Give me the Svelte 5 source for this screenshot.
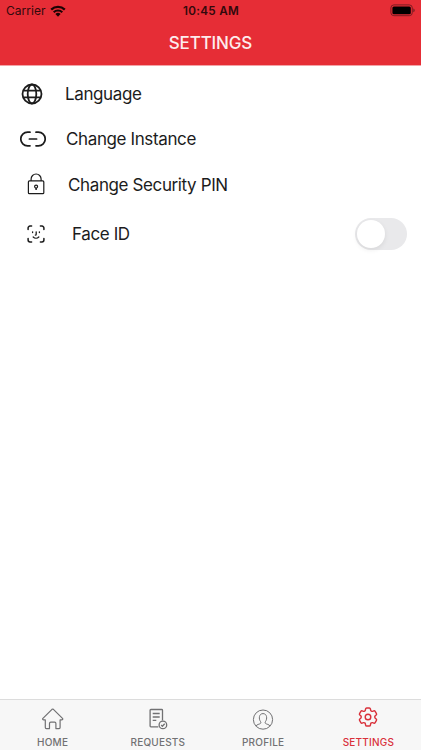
<script lang="ts">
    let faceId = $state(false)
    let active = $state('settings')

    const tabs = [
        { id: 'home', label: 'HOME' },
        { id: 'requests', label: 'REQUESTS' },
        { id: 'profile', label: 'PROFILE' },
        { id: 'settings', label: 'SETTINGS' },
    ]
</script>

<div class="screen">
    <header>
        <div class="status">
            <div class="carrier">
                <span>Carrier</span>
                <svg width="16" height="12" viewBox="0 0 16 12">
                    <path d="M1.2 4.7a9.8 9.8 0 0 1 13.6 0" fill="none" stroke="currentColor" stroke-width="2.3" />
                    <path d="M3.7 7.3a6.2 6.2 0 0 1 8.6 0" fill="none" stroke="currentColor" stroke-width="2.1" />
                    <path d="M5.4 9a3.7 3.7 0 0 1 5.2 0L8 11.7z" fill="currentColor" />
                </svg>
            </div>
            <span class="time">10:45 AM</span>
            <svg class="battery" width="26" height="13" viewBox="0 0 26 13">
                <rect x="0.9" y="0.9" width="21.4" height="10.8" rx="3" fill="none" stroke="#7c1c22" />
                <rect x="2.4" y="2.4" width="18.4" height="7.8" rx="1.5" fill="#000" />
                <path d="M23.3 4.4c1.9.5 1.9 3.3 0 3.8z" fill="#7c1c22" />
            </svg>
        </div>
        <h1>SETTINGS</h1>
    </header>

    <main>
        <div class="row language">
            <svg width="22" height="22" viewBox="0 0 22 22" fill="none" stroke="currentColor" stroke-width="1.8">
                <circle cx="11" cy="11" r="9.5" />
                <ellipse cx="11" cy="11" rx="4.3" ry="9.5" />
                <path d="M2.3 7.7h17.4M2.3 14.3h17.4" />
            </svg>
            <span>Language</span>
        </div>
        <div class="row instance">
            <svg width="26" height="16" viewBox="0 0 26 16" fill="none" stroke="currentColor" stroke-width="1.7" stroke-linecap="round">
                <path d="M10 1.2H7.6a6.8 6.8 0 0 0 0 13.6H10M16 1.2h2.4a6.8 6.8 0 0 1 0 13.6H16M9.4 8h7.2" />
            </svg>
            <span>Change Instance</span>
        </div>
        <div class="row pin">
            <svg width="18" height="22" viewBox="0 0 18 22" fill="none" stroke="currentColor" stroke-width="1.2">
                <rect x="1.4" y="7.9" width="15.4" height="12.8" rx="1" />
                <path d="M4.1 7.9V6a5 5 0 0 1 10 0v1.9" />
                <circle cx="9.1" cy="13.6" r="1.5" />
                <path d="M9.1 15.1v2" stroke-width="1.5" />
            </svg>
            <span>Change Security PIN</span>
        </div>
        <div class="row face">
            <svg width="18" height="18" viewBox="0 0 18 18" fill="none" stroke="currentColor" stroke-width="1.5" stroke-linecap="round">
                <path d="M1.1 4.6V3A1.9 1.9 0 0 1 3 1.1h1.6M13.4 1.1H15A1.9 1.9 0 0 1 16.9 3v1.6M16.9 13.4V15a1.9 1.9 0 0 1-1.9 1.9h-1.6M4.6 16.9H3A1.9 1.9 0 0 1 1.1 15v-1.6" />
                <path d="M5.6 6.8v.8M12.4 6.8v.8M9.2 6.8v2.4c0 .7-.3.9-.9.9M6.2 12c1.5 1.5 4.1 1.5 5.6 0" stroke-width="1.3" />
            </svg>
            <span>Face ID</span>
            <button class="toggle" class:on={faceId} role="switch" aria-checked={faceId} aria-label="Face ID" onclick={() => (faceId = !faceId)}>
                <i></i>
            </button>
        </div>
    </main>

    <nav>
        {#each tabs as tab}
            <button class="tab {tab.id}" class:active={active === tab.id} onclick={() => (active = tab.id)}>
                {#if tab.id === 'home'}
                    <svg width="22" height="22" viewBox="0.3 0 22 22" fill="none" stroke="currentColor" stroke-width="1.2" stroke-linejoin="round">
                        <path d="M10.3 1.3 1.2 10.4c-.7.8.1 1.5.8 1.5h1.6v7.7c0 .6.4 1 1 1h3.2v-5.2c0-.8.5-1.3 1.3-1.3h3.8c.8 0 1.3.5 1.3 1.3v5.2h3.2c.6 0 1-.4 1-1v-7.7H20c.7 0 1.5-.7.8-1.5l-9.1-9.1c-.5-.4-.9-.4-1.4 0z" />
                    </svg>
                {:else if tab.id === 'requests'}
                    <svg width="22" height="22" viewBox="0 0 22 22" fill="none" stroke="currentColor" stroke-width="1.3">
                        <path d="M11.3 18.9H3.9c-.5 0-.8-.3-.8-.8V2.3c0-.5.3-.8.8-.8h10.8c.5 0 .8.3.8.8v10.3" />
                        <path d="M5.7 5.5h7M5.7 9h7M5.7 12.3h3.6" />
                        <circle cx="15.9" cy="16.9" r="3.8" />
                        <path d="m14.2 17 1.2 1.2 2.3-2.5" />
                    </svg>
                {:else if tab.id === 'profile'}
                    <svg width="22" height="22" viewBox="0 0 22 22" fill="none" stroke="currentColor" stroke-width="1">
                        <circle cx="11" cy="11.6" r="9.6" />
                        <path d="M4 18.1c.4-1.7 3.9-1.8 4.7-2.9.3-.5.2-1.2-.2-1.7C6.6 11 6.8 5.6 11 5.6s4.4 5.4 2.5 7.9c-.4.5-.5 1.2-.2 1.7.8 1.1 4.3 1.2 4.7 2.9" />
                    </svg>
                {:else}
                    <svg width="24" height="24" viewBox="0 0 24 24" fill="none" stroke="currentColor" stroke-width="1.4" stroke-linejoin="round">
                        <path d="M9.594 3.94c.09-.542.56-.94 1.11-.94h2.593c.55 0 1.02.398 1.11.94l.213 1.281c.063.374.313.686.645.87.074.04.147.083.22.127.325.196.72.257 1.075.124l1.217-.456a1.125 1.125 0 0 1 1.37.49l1.296 2.247a1.125 1.125 0 0 1-.26 1.431l-1.003.827c-.293.241-.438.613-.43.992a7.723 7.723 0 0 1 0 .255c-.008.378.137.75.43.991l1.004.827c.424.35.534.955.26 1.43l-1.298 2.247a1.125 1.125 0 0 1-1.369.491l-1.217-.456c-.355-.133-.75-.072-1.076.124a6.47 6.47 0 0 1-.22.128c-.331.183-.581.495-.644.869l-.213 1.281c-.09.543-.56.94-1.11.94h-2.594c-.55 0-1.019-.398-1.11-.94l-.213-1.281c-.062-.374-.312-.686-.644-.87a6.52 6.52 0 0 1-.22-.127c-.325-.196-.72-.257-1.076-.124l-1.217.456a1.125 1.125 0 0 1-1.369-.49l-1.297-2.247a1.125 1.125 0 0 1 .26-1.431l1.004-.827c.292-.24.437-.613.43-.991a6.932 6.932 0 0 1 0-.255c.007-.38-.138-.751-.43-.992l-1.004-.827a1.125 1.125 0 0 1-.26-1.43l1.297-2.247a1.125 1.125 0 0 1 1.37-.491l1.216.456c.356.133.751.072 1.076-.124.072-.044.146-.086.22-.128.332-.183.582-.495.644-.869l.214-1.28Z" />
                        <circle cx="12" cy="12" r="2.8" />
                    </svg>
                {/if}
                <span>{tab.label}</span>
            </button>
        {/each}
    </nav>
</div>

<style>
    :global(body) {
        background: #fff;
    }

    .screen {
        display: flex;
        flex-direction: column;
        width: 421px;
        height: 750px;
        font-family: Inter, "Liberation Sans", sans-serif;
        color: #1c1c1c;
    }

    header {
        height: 66px;
        background: #e62d36;
        border-bottom: 1px solid #f3a3a7;
        box-sizing: border-box;
    }

    .status {
        display: grid;
        grid-template-columns: 1fr auto 1fr;
        align-items: center;
        height: 21px;
        padding: 0 5px 0 6px;
        font-size: 12px;
        line-height: 22px;
        color: #32090c;
    }

    .carrier {
        display: flex;
        align-items: center;
        gap: 4px;
    }

    .carrier span {
        letter-spacing: 0.05px;
    }

    .carrier svg {
        color: #1d0304;
    }

    .time {
        font-weight: 600;
        font-size: 11.7px;
        letter-spacing: 0.3px;
    }

    .battery {
        justify-self: end;
        margin-bottom: 1px;
    }

    h1 {
        margin: 0;
        font-size: 17px;
        font-weight: 500;
        line-height: 44px;
        text-align: center;
        letter-spacing: -0.15px;
        color: #fdeced;
    }

    main {
        flex: 1;
        padding-top: 5px;
    }

    .row {
        display: flex;
        align-items: center;
        height: 45px;
        padding-right: 14px;
        font-size: 17px;
        letter-spacing: -0.38px;
    }

    .language {
        padding-left: 21px;
        gap: 22px;
    }

    .instance {
        padding-left: 20px;
        gap: 20px;
    }

    .pin {
        height: 47px;
        padding-left: 27px;
        gap: 23px;
    }

    .pin svg {
        margin-top: -2px;
    }

    .face {
        height: 51px;
        padding-left: 27px;
        gap: 27px;
    }

    .toggle {
        display: flex;
        width: 52px;
        height: 32px;
        margin-left: auto;
        padding: 2px;
        border: none;
        border-radius: 16px;
        background: #e9e9eb;
    }

    .toggle i {
        width: 28px;
        height: 28px;
        border-radius: 50%;
        background: #fff;
        box-shadow: 0 2px 5px rgba(0, 0, 0, 0.08);
    }

    .toggle.on {
        justify-content: flex-end;
        background: #34c759;
    }

    nav {
        display: grid;
        grid-template-columns: repeat(4, 1fr);
        height: 51px;
        box-sizing: border-box;
        border-top: 1px solid #dcdcdc;
        background: #f7f7f7;
    }

    .tab {
        display: flex;
        flex-direction: column;
        align-items: center;
        padding: 8px 0 0;
        border: none;
        background: none;
        font-family: inherit;
        font-size: 10px;
        font-weight: 500;
        line-height: 12px;
        letter-spacing: 0.2px;
        color: #717173;
    }

    .tab span {
        margin-top: 6px;
    }

    .tab.active {
        color: #d9303a;
    }

    .tab.settings {
        padding-top: 5px;
    }

    .tab.settings span {
        margin-top: 7px;
    }
</style>
